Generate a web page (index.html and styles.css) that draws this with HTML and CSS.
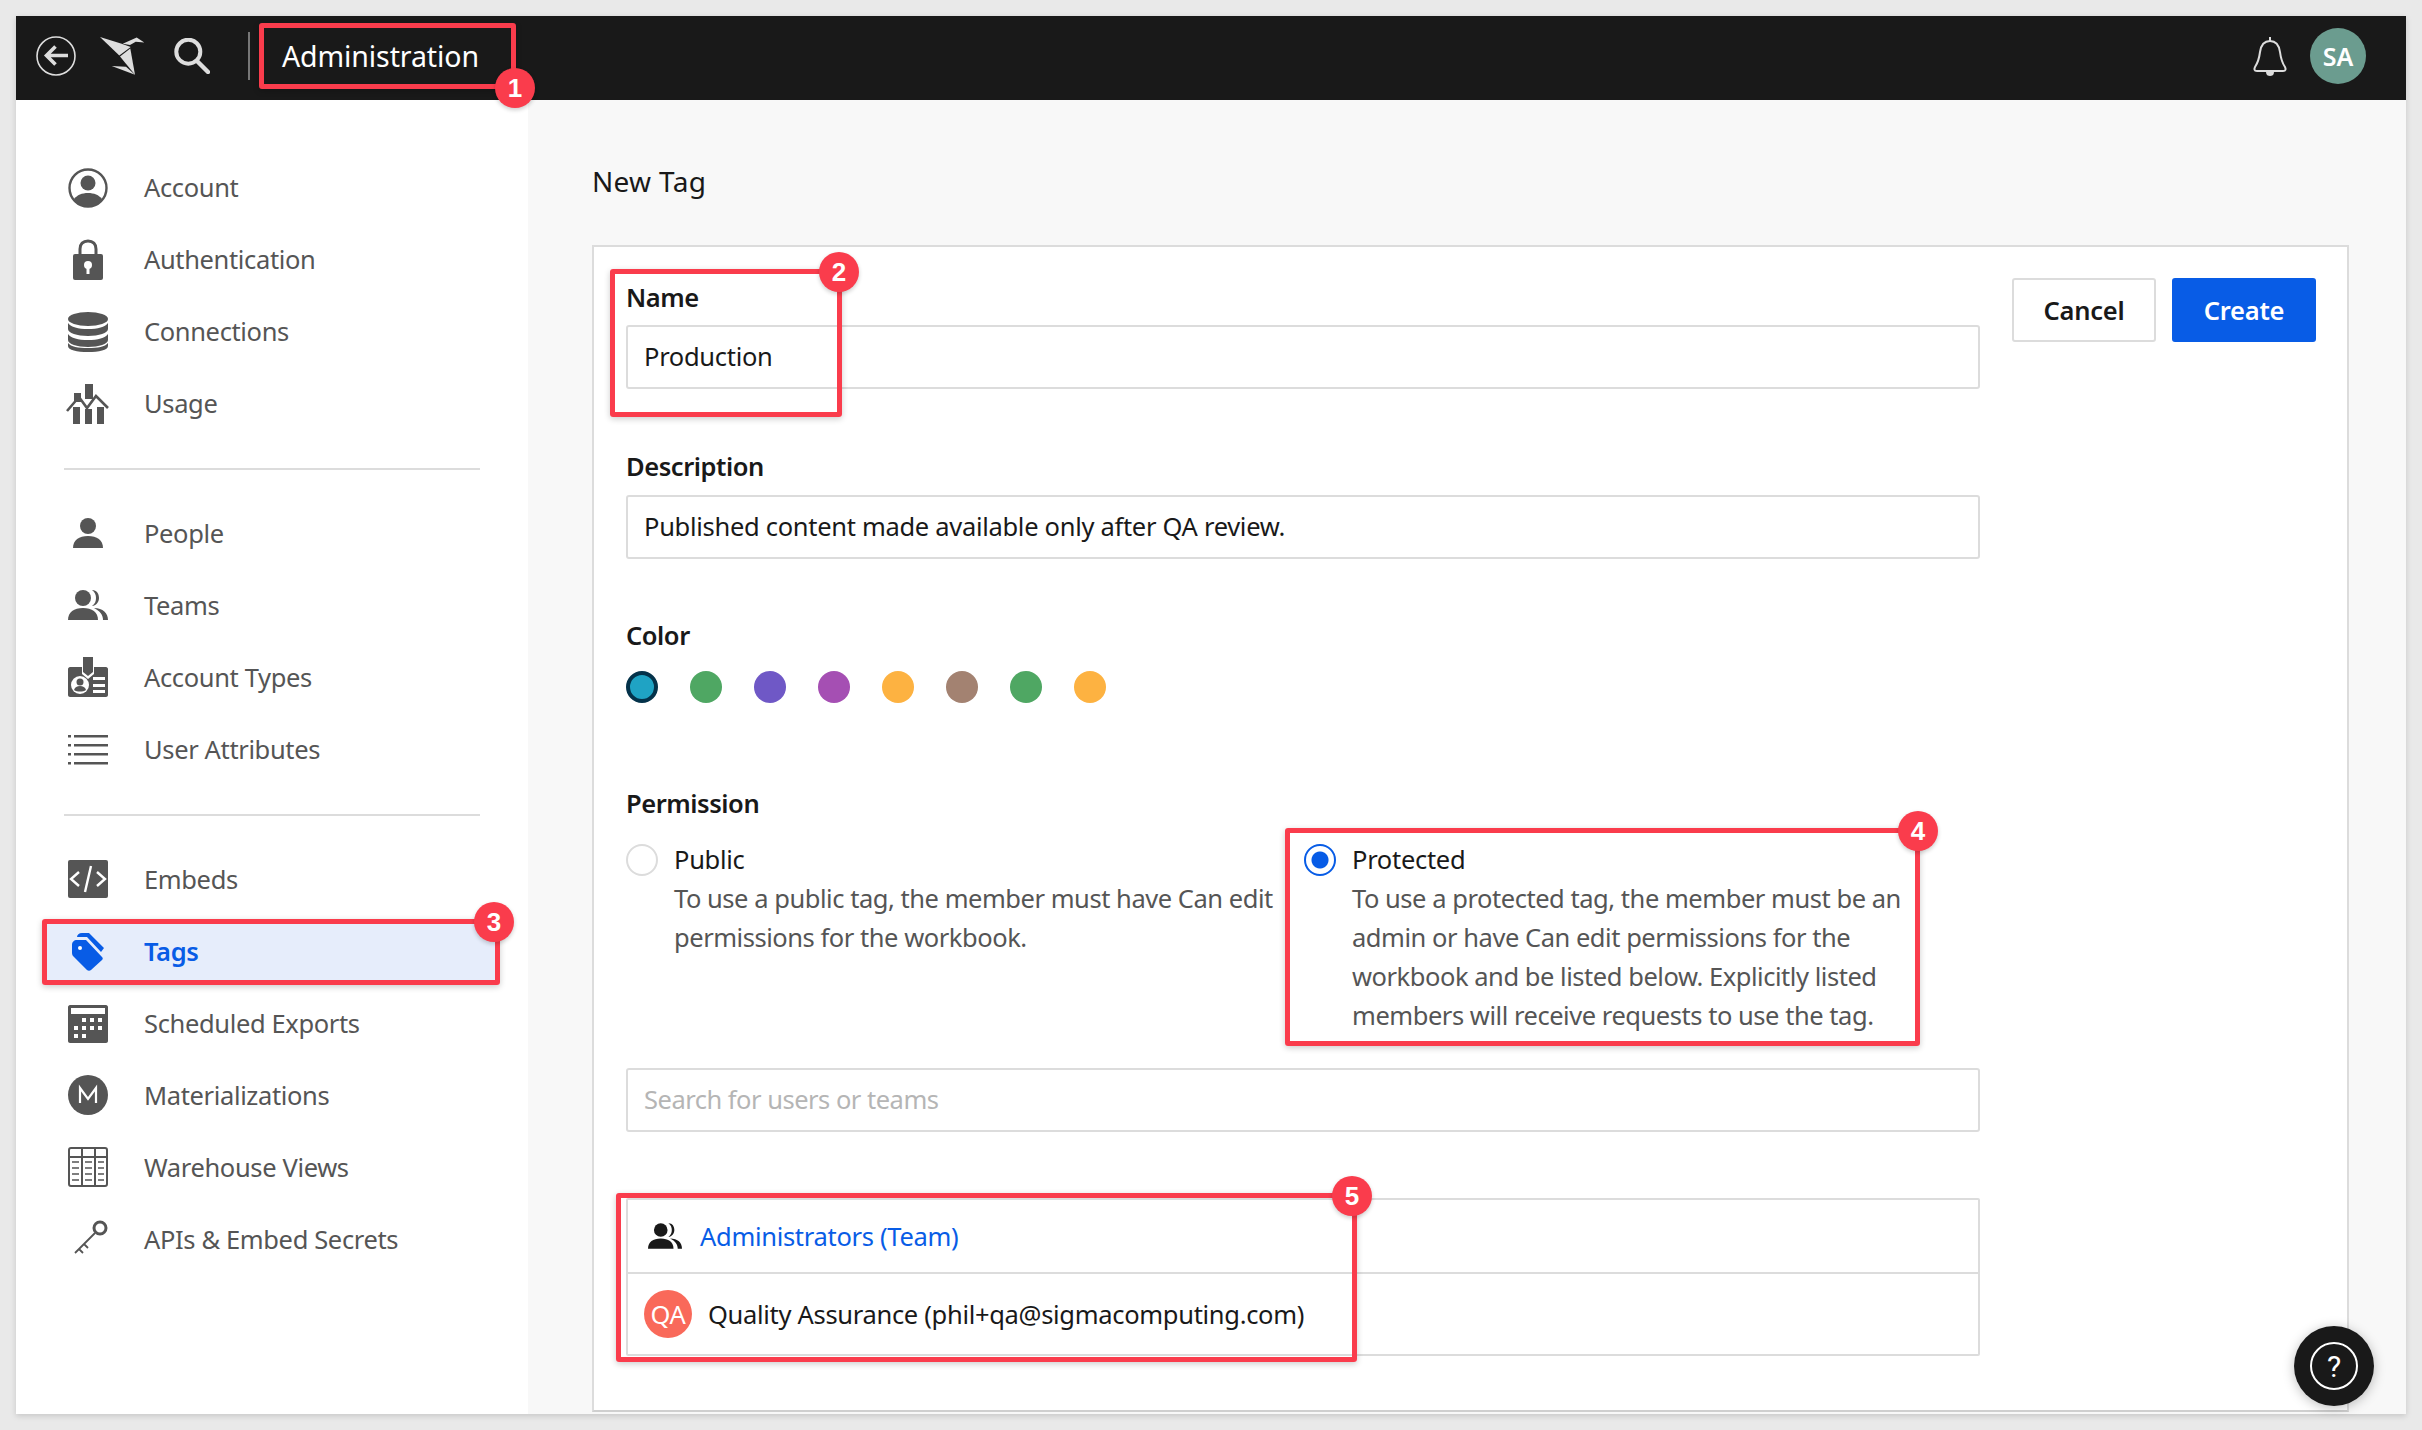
FILE: index.html
```html
<!DOCTYPE html>
<html lang="en">
<head>
    <meta charset="UTF-8">
    <meta name="viewport" content="width=device-width, initial-scale=1.0">
    <title>Administration - New Tag</title>
    <link rel="stylesheet" href="styles.css">
</head>
<body>
<div class="app">
    <!-- Top bar -->
    <header class="topbar">
        <svg class="back-icon" viewBox="0 0 40 40"><circle cx="20" cy="20" r="19" fill="none" stroke="#ddd" stroke-width="1.600"/><path d="M32 19.500H11M19.500 10.500l-9 9 9 9" fill="none" stroke="#ddd" stroke-width="3.600"/></svg>
        <svg class="logo-icon" viewBox="0 0 45 38"><path d="M0 0l21.700 6.700 9 3.300-11.400 8.400z" fill="#ddd"/><path d="M22.700 6.700L36.700.4l7.600 5-8.600-.7L30 8z" fill="#ddd"/><path d="M20 19.400l10.300-8L35 37.700z" fill="#ddd"/><path d="M11.700 29l14.300.7 9 8z" fill="#ddd"/></svg>
        <svg class="search-icon" viewBox="0 0 36 36"><circle cx="14.300" cy="13.700" r="12" fill="none" stroke="#ddd" stroke-width="4"/><path d="M23 23l11 11" stroke="#ddd" stroke-width="4.400" stroke-linecap="round"/></svg>
        <span class="topbar-sep"></span>
        <span class="topbar-title">Administration</span>
        <svg class="bell-icon" viewBox="0 0 34 40"><path d="M17 1v4M17 5c-6 0-9 4-10 11-1 8-3 12-5 15-1 2-1 4 2 4h26c3 0 3-2 2-4-2-3-4-7-5-15-1-7-4-11-10-11z" fill="none" stroke="#ddd" stroke-width="2"/><path d="M13 36h8c0 3-2 4-4 4s-4-1-4-4z" fill="#ddd"/></svg>
        <span class="avatar-sa">SA</span>
    </header>

    <div class="body-row">
        <!-- Sidebar -->
        <nav class="sidebar">
            <a class="nav-item">
                <svg viewBox="0 0 40 40"><circle cx="20" cy="20" r="18.500" fill="none" stroke="#555" stroke-width="2.400"/><circle cx="20" cy="15" r="7.500" fill="#555"/><path d="M6 31c3-4 8-6 14-6s11 2 14 6c-3 5-8 8-14 8S9 36 6 31z" fill="#555"/></svg>
                <span>Account</span>
            </a>
            <a class="nav-item">
                <svg viewBox="0 0 40 40"><path d="M12 15V9c0-5 3-8 8-8s8 3 8 8v6" fill="none" stroke="#555" stroke-width="3"/><rect x="5" y="14" width="30" height="26" rx="2" fill="#555"/><circle cx="20" cy="25" r="4" fill="#fff"/><rect x="18.500" y="26" width="3" height="8" fill="#fff"/></svg>
                <span>Authentication</span>
            </a>
            <a class="nav-item">
                <svg viewBox="0 0 40 40"><ellipse cx="20" cy="7" rx="20" ry="7" fill="#555"/><path d="M0 11c3 4 10 6 20 6s17-2 20-6v6c0 4-9 7-20 7S0 21 0 17z" fill="#555"/><path d="M0 22c3 4 10 6 20 6s17-2 20-6v6c0 4-9 7-20 7S0 32 0 28z" fill="#555"/><path d="M0 31c3 4 10 5 20 5s17-1 20-5v3c0 4-9 6-20 6S0 38 0 34z" fill="#555"/></svg>
                <span>Connections</span>
            </a>
            <a class="nav-item">
                <svg viewBox="0 0 40 40"><rect x="5" y="23" width="7" height="17" fill="#555"/><rect x="17" y="25" width="7" height="15" fill="#555"/><rect x="29" y="23" width="7" height="17" fill="#555"/><rect x="17" y="0" width="8" height="15" fill="#555"/><rect x="6" y="9" width="7" height="9" fill="#555"/><path d="M-1 27L11 13l8 11 9-12 12 12" fill="none" stroke="#555" stroke-width="2.600"/></svg>
                <span>Usage</span>
            </a>
            <hr class="nav-divider">
            <a class="nav-item">
                <svg viewBox="0 0 40 40"><circle cx="20" cy="13" r="8" fill="#555"/><path d="M5 35c0-8 6-12 15-12s15 4 15 12z" fill="#555"/></svg>
                <span>People</span>
            </a>
            <a class="nav-item">
                <svg viewBox="0 0 40 40"><circle cx="15" cy="13" r="8" fill="#555"/><path d="M24 5c5 0 7 4 7 8s-3 8-7 8c3-2 4-5 4-8s-1-6-4-8z" fill="#555"/><path d="M0 35c0-8 6-12 15-12s15 4 15 12z" fill="#555"/><path d="M26 23c9 0 14 5 14 12h-5c0-5-3-9-9-12z" fill="#555"/></svg>
                <span>Teams</span>
            </a>
            <a class="nav-item">
                <svg viewBox="0 0 40 40"><path d="M2 10h12v7l6 5 6-5v-7h12c1 0 2 1 2 2v26c0 1-1 2-2 2H2c-1 0-2-1-2-2V12c0-1 1-2 2-2z" fill="#555"/><path d="M15 0h10v15l-5 4-5-4z" fill="#555"/><circle cx="12" cy="28" r="9" fill="#fff"/><circle cx="12" cy="25" r="3.500" fill="#555"/><path d="M6 33c1-3 3-4 6-4s5 1 6 4c-3 2-9 2-12 0z" fill="#555"/><path d="M25 20h12v3H25zM25 27h12v3H25zM25 33h12v3H25z" fill="#fff"/></svg>
                <span>Account Types</span>
            </a>
            <a class="nav-item">
                <svg viewBox="0 0 40 40"><path d="M0 6h3v2.500H0zM6 6h34v2.500H6zM0 15h3v2.500H0zM6 15h34v2.500H6zM0 24h3v2.500H0zM6 24h34v2.500H6zM0 33h3v2.500H0zM6 33h34v2.500H6z" fill="#555"/></svg>
                <span>User Attributes</span>
            </a>
            <hr class="nav-divider nav-divider-second">
            <a class="nav-item">
                <svg viewBox="0 0 40 40"><rect x="0" y="1" width="40" height="38" rx="2" fill="#555"/><path d="M11 13l-8 7 8 7M29 13l8 7-8 7M23 7l-6 26" fill="none" stroke="#fff" stroke-width="2.400"/></svg>
                <span>Embeds</span>
            </a>
            <a class="nav-item active">
                <svg viewBox="0 0 40 40"><path d="M4 14c0-3 2-5 5-5h9l16 17c1 1 1 2 0 3L23 39c-1 1-3 1-4 0L6 26c-1-1-2-2-2-4z" fill="#085ce6"/><path d="M9 6c0-2 2-4 5-4h7l15 15-3 4L19 6z" fill="#085ce6"/><circle cx="12" cy="17" r="2" fill="#fff"/></svg>
                <span>Tags</span>
            </a>
            <a class="nav-item">
                <svg viewBox="0 0 40 40"><path d="M2 2h36c1 0 2 1 2 2v34c0 1-1 2-2 2H2c-1 0-2-1-2-2V4c0-1 1-2 2-2z" fill="#555"/><rect x="3" y="5" width="34" height="6" fill="#fff"/><path d="M14 15h4v4h-4zM22 15h4v4h-4zM30 15h4v4h-4zM6 23h4v4H6zM14 23h4v4h-4zM22 23h4v4h-4zM30 23h4v4h-4zM6 31h4v4H6zM14 31h4v4h-4z" fill="#fff"/></svg>
                <span>Scheduled Exports</span>
            </a>
            <a class="nav-item">
                <svg viewBox="0 0 40 40"><circle cx="20" cy="20" r="20" fill="#555"/><path d="M12 28V13l8 11 8-11v15" fill="none" stroke="#fff" stroke-width="2.200"/></svg>
                <span>Materializations</span>
            </a>
            <a class="nav-item">
                <svg viewBox="0 0 40 40"><rect x="1" y="1" width="38" height="38" rx="2" fill="none" stroke="#555" stroke-width="2"/><path d="M1 10h38M14 1v38M27 1v38" stroke="#555" stroke-width="2"/><path d="M4 15h7M4 21h7M4 27h7M4 33h7M17 15h7M17 21h7M17 27h7M17 33h7M30 15h6M30 21h6M30 27h6M30 33h6" stroke="#555" stroke-width="1.600"/></svg>
                <span>Warehouse Views</span>
            </a>
            <a class="nav-item">
                <svg viewBox="0 0 40 40"><ellipse cx="32" cy="9" rx="6" ry="6" fill="none" stroke="#555" stroke-width="3"/><path d="M27 14L7 34M16 25l4 4M11 30l4 4" fill="none" stroke="#555" stroke-width="1.800"/></svg>
                <span>APIs &amp; Embed Secrets</span>
            </a>
        </nav>

        <!-- Main content -->
        <main class="content">
            <h1 class="page-title">New Tag</h1>
            <section class="card">
                <form class="tag-form">
                    <div class="form-label">Name</div>
                    <div class="field">Production</div>

                    <div class="form-label label-description">Description</div>
                    <div class="field">Published content made available only after QA review.</div>

                    <div class="form-label label-color">Color</div>
                    <div class="swatches">
                        <span class="swatch swatch-selected"></span>
                        <span class="swatch swatch-green"></span>
                        <span class="swatch swatch-purple"></span>
                        <span class="swatch swatch-magenta"></span>
                        <span class="swatch swatch-orange"></span>
                        <span class="swatch swatch-brown"></span>
                        <span class="swatch swatch-green"></span>
                        <span class="swatch swatch-orange"></span>
                    </div>

                    <div class="form-label label-permission">Permission</div>
                    <div class="permissions">
                        <div class="permission">
                            <span class="radio"></span>
                            <div class="permission-text">
                                <div class="permission-name">Public</div>
                                <p class="permission-desc">To use a public tag, the member must have Can edit<br>permissions for the workbook.</p>
                            </div>
                        </div>
                        <div class="permission">
                            <span class="radio radio-on"></span>
                            <div class="permission-text">
                                <div class="permission-name">Protected</div>
                                <p class="permission-desc">To use a protected tag, the member must be an<br>admin or have Can edit permissions for the<br>workbook and be listed below. Explicitly listed<br>members will receive requests to use the tag.</p>
                            </div>
                        </div>
                    </div>

                    <div class="field field-search">Search for users or teams</div>

                    <div class="member-list">
                        <div class="member member-team">
                            <svg viewBox="0 0 40 40"><circle cx="15" cy="13" r="8" fill="#191919"/><path d="M24 5c5 0 7 4 7 8s-3 8-7 8c3-2 4-5 4-8s-1-6-4-8z" fill="#191919"/><path d="M0 35c0-8 6-12 15-12s15 4 15 12z" fill="#191919"/><path d="M26 23c9 0 14 5 14 12h-5c0-5-3-9-9-12z" fill="#191919"/></svg>
                            <a class="member-link">Administrators (Team)</a>
                        </div>
                        <div class="member member-user">
                            <span class="avatar-qa">QA</span>
                            <span class="member-name">Quality Assurance (phil+qa@sigmacomputing.com)</span>
                        </div>
                    </div>
                </form>
                <div class="actions">
                    <button class="btn" type="button">Cancel</button>
                    <button class="btn btn-primary" type="button">Create</button>
                </div>
            </section>
        </main>
    </div>

    <button class="help-btn" type="button"><span class="help-ring">?</span></button>

    <!-- Numbered callouts -->
    <div class="mark mark-1"></div>
    <div class="mark mark-2"></div>
    <div class="mark mark-3"></div>
    <div class="mark mark-4"></div>
    <div class="mark mark-5"></div>
    <span class="badge badge-1">1</span>
    <span class="badge badge-2">2</span>
    <span class="badge badge-3">3</span>
    <span class="badge badge-4">4</span>
    <span class="badge badge-5">5</span>
</div>
</body>
</html>
```

FILE: styles.css
```css
/* Global */
* {
    box-sizing: border-box;
}

body {
    margin: 0;
    padding: 16px;
    background-color: #e9e9e9;
    font-family: "Noto Sans", Arial, sans-serif;
    font-size: 25.5px;
    letter-spacing: -0.3px;
    color: #191919;
}

.app {
    position: relative;
    width: 2390px;
    height: 1398px;
    background-color: #f8f8f8;
    box-shadow: 0 2px 6px rgba(0, 0, 0, 0.15);
}

/* Top bar */
.topbar {
    display: flex;
    align-items: center;
    height: 84px;
    padding: 0 40px 4px 20px;
    background-color: #191919;
}

.back-icon {
    width: 40px;
    height: 40px;
}

.logo-icon {
    width: 45px;
    height: 38px;
    margin-left: 24px;
}

.search-icon {
    width: 36px;
    height: 36px;
    margin-left: 29px;
}

.topbar-sep {
    width: 2px;
    height: 48px;
    margin-left: 38px;
    background-color: #777;
}

.topbar-title {
    margin-left: 32px;
    font-size: 28.5px;
    letter-spacing: -0.1px;
    color: #fff;
}

.bell-icon {
    width: 34px;
    height: 40px;
    margin-left: auto;
}

.avatar-sa {
    display: flex;
    align-items: center;
    justify-content: center;
    width: 56px;
    height: 56px;
    margin-left: 23px;
    border-radius: 50%;
    background-color: #6b9c8f;
    color: #fff;
    font-size: 25px;
    font-weight: 600;
    letter-spacing: 0;
}

.body-row {
    display: flex;
    height: 1314px;
}

/* Sidebar */
.sidebar {
    width: 512px;
    flex-shrink: 0;
    padding-top: 52px;
    background-color: #fff;
    color: #555;
    letter-spacing: -0.36px;
}

.nav-item {
    display: flex;
    align-items: center;
    gap: 36px;
    height: 72px;
    padding-left: 52px;
}

.nav-item span {
    margin-bottom: 2px;
}

.nav-divider ~ .nav-item span {
    margin-bottom: 0;
}

.nav-item svg {
    width: 40px;
    height: 40px;
    flex-shrink: 0;
    overflow: visible;
}

.nav-item.active {
    height: 60px;
    margin: 6px 32px 6px 30px;
    padding-left: 22px;
    background-color: #e6edfb;
    color: #085ce6;
    font-weight: 600;
}

.nav-divider {
    height: 2px;
    margin: 28px 48px 27px;
    border: none;
    background-color: #dcdcdc;
}

.nav-divider-second {
    margin-top: 29px;
}

/* Main */
.content {
    flex: 1;
    padding: 0 57px 0 64px;
}

.page-title {
    margin: 0;
    padding-top: 61px;
    height: 145px;
    line-height: 40px;
    font-size: 28px;
    font-weight: 400;
    letter-spacing: 0.3px;
}

.card {
    display: flex;
    height: 1167px;
    padding: 34px 31px 0 32px;
    border: 2px solid #dcdcdc;
    border-bottom-color: #cfcfcf;
    background-color: #fff;
}

.tag-form {
    width: 1354px;
    flex-shrink: 0;
}

.form-label {
    height: 34px;
    margin-bottom: 10px;
    line-height: 33px;
    font-weight: 600;
    letter-spacing: -0.45px;
}

.field {
    height: 64px;
    padding-left: 16px;
    line-height: 59px;
    border: 2px solid #dcdcdc;
    border-radius: 3px;
}

.label-description {
    margin-top: 61px;
    margin-bottom: 11px;
}

.label-color {
    margin-top: 60px;
    margin-bottom: 18px;
}

.swatches {
    display: flex;
    gap: 32px;
}

.swatch {
    width: 32px;
    height: 32px;
    border-radius: 50%;
}

.swatch-selected {
    background-color: #1fa3c4;
    border: 4px solid #04324a;
}

.swatch-green { background-color: #4fa763; }
.swatch-purple { background-color: #6f58c6; }
.swatch-magenta { background-color: #a54fb3; }
.swatch-orange { background-color: #fdb241; }
.swatch-brown { background-color: #a38271; }

.label-permission {
    margin-top: 84px;
    margin-bottom: 20px;
}

.permissions {
    display: grid;
    grid-template-columns: 678px 1fr;
}

.permission {
    display: flex;
    gap: 16px;
    height: 195px;
}

.permission-text {
    margin-top: -1px;
}

.radio {
    width: 32px;
    height: 32px;
    margin-top: 3px;
    flex-shrink: 0;
    border: 2px solid #dcdcdc;
    border-radius: 50%;
    background-color: #fff;
}

.radio-on {
    border-color: #085ce6;
    background: radial-gradient(circle, #085ce6 0 8px, #fff 9px);
}

.permission-name {
    line-height: 39px;
}

.permission-desc {
    margin: 0;
    line-height: 39px;
    letter-spacing: -0.46px;
    color: #555;
    white-space: nowrap;
}

.field-search {
    margin-top: 32px;
    letter-spacing: -0.5px;
    color: #b5b5b5;
}

.member-list {
    margin-top: 66px;
    border: 2px solid #dcdcdc;
    border-radius: 2px;
}

.member {
    display: flex;
    align-items: center;
}

.member-team {
    height: 74px;
    padding-left: 20px;
    gap: 18px;
    border-bottom: 2px solid #dcdcdc;
}

.member-team svg {
    width: 34px;
    height: 34px;
}

.member-link {
    color: #085ce6;
}

.member-user {
    height: 80px;
    padding-left: 16px;
    gap: 16px;
}

.member-name {
    letter-spacing: -0.31px;
}

.avatar-qa {
    display: flex;
    align-items: center;
    justify-content: center;
    width: 48px;
    height: 48px;
    border-radius: 50%;
    background-color: #f9695a;
    color: #fff;
}

/* Buttons */
.actions {
    display: flex;
    gap: 16px;
    margin-top: -3px;
    margin-left: 32px;
}

.btn {
    width: 144px;
    height: 64px;
    border: 2px solid #dcdcdc;
    border-radius: 3px;
    background-color: #fff;
    color: #191919;
    font-family: inherit;
    font-size: 25.5px;
    letter-spacing: -0.25px;
    font-weight: 600;
}

.btn-primary {
    border-color: #085ce6;
    background-color: #085ce6;
    color: #fff;
}

.help-btn {
    position: absolute;
    left: 2278px;
    top: 1310px;
    display: flex;
    align-items: center;
    justify-content: center;
    width: 80px;
    height: 80px;
    padding: 0;
    border: none;
    border-radius: 50%;
    background-color: #191919;
    box-shadow: 0 2px 12px rgba(0, 0, 0, 0.25);
}

.help-ring {
    display: flex;
    align-items: center;
    justify-content: center;
    width: 48px;
    height: 48px;
    border: 2px solid #fff;
    border-radius: 50%;
    color: #fff;
    font-family: Roboto, sans-serif;
    font-size: 30px;
}

/* Callouts */
.mark {
    position: absolute;
    border: 5px solid #fa3c4c;
    border-radius: 3px;
    box-shadow: 0 2px 6px rgba(0, 0, 0, 0.2);
}

.mark-1 { left: 243px; top: 7px; width: 257px; height: 66px; }
.mark-2 { left: 594px; top: 253px; width: 232px; height: 148px; }
.mark-3 { left: 26px; top: 903px; width: 458px; height: 66px; }
.mark-4 { left: 1269px; top: 812px; width: 635px; height: 218px; }
.mark-5 { left: 600px; top: 1177px; width: 741px; height: 169px; }

.badge {
    position: absolute;
    display: flex;
    align-items: center;
    justify-content: center;
    width: 40px;
    height: 40px;
    border-radius: 50%;
    background-color: #fa3c4c;
    box-shadow: 0 2px 4px rgba(0, 0, 0, 0.2);
    color: #fff;
    font-family: "Liberation Sans", Arial, sans-serif;
    font-size: 26px;
    font-weight: 700;
    letter-spacing: 0;
}

.badge-1 { left: 479px; top: 52px; }
.badge-2 { left: 803px; top: 236px; }
.badge-3 { left: 458px; top: 886px; }
.badge-4 { left: 1882px; top: 795px; }
.badge-5 { left: 1316px; top: 1160px; }
```
